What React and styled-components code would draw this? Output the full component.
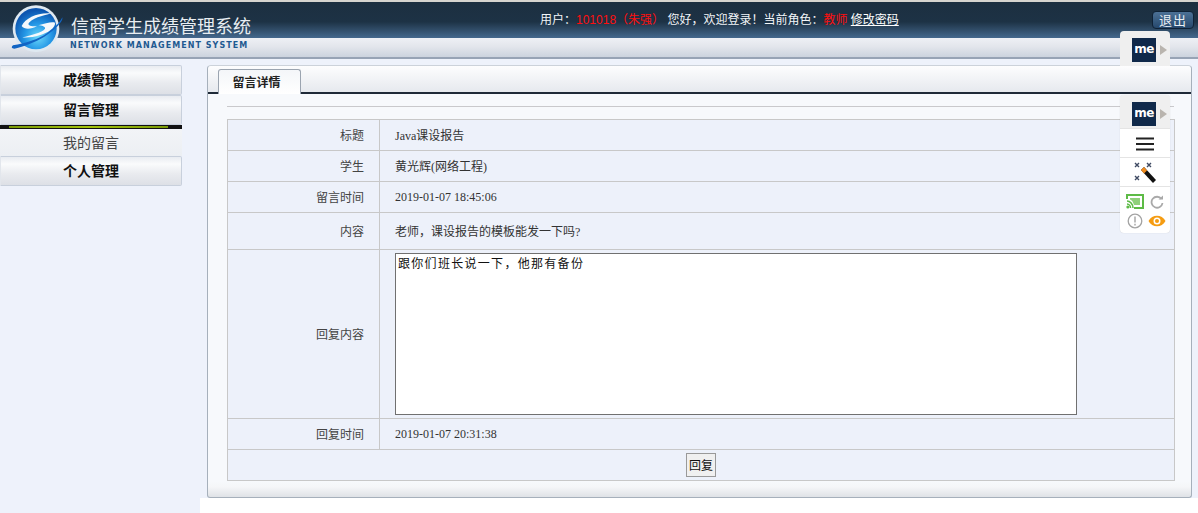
import styled, { createGlobalStyle } from "styled-components"

const rows = [
   { label: "标题", value: "Java课设报告", height: 31 },
   { label: "学生", value: "黄光辉(网络工程)", height: 31 },
   { label: "留言时间", value: "2019-01-07 18:45:06", height: 31 },
   { label: "内容", value: "老师，课设报告的模板能发一下吗?", height: 37 },
]

const Logo = () => (
   <svg width="65" height="56" viewBox="0 0 195 168">
      <defs>
         <radialGradient id="ball" cx="55%" cy="70%" r="65%">
            <stop offset="0" stopColor="#6bd8f9" />
            <stop offset="0.5" stopColor="#2497e6" />
            <stop offset="1" stopColor="#0c55b0" />
         </radialGradient>
      </defs>
      <circle cx="93" cy="80" r="70" fill="#dfe9f1" />
      <circle cx="93" cy="80" r="62" fill="url(#ball)" />
      <path d="M50 72C62 46 100 30 140 34C128 38 90 44 72 62C66 70 78 74 96 72C80 82 58 84 50 72Z" fill="#f5f9fc" />
      <path d="M100 70C120 64 142 58 150 62C152 78 128 92 104 100C86 106 64 108 52 106C76 100 112 92 120 80C122 74 110 70 100 70Z" fill="#f5f9fc" />
      <path d="M172 46C176 58 150 84 118 104C92 120 50 136 28 140C20 140 18 136 24 130C60 124 100 112 128 92C148 78 164 62 172 46Z" fill="#1265c4" />
   </svg>
)

const MeBadge = () => (
   <MeRow>
      <MeLogo>me</MeLogo>
      <svg width="7" height="10" viewBox="0 0 7 10">
         <path d="M0 0L7 5L0 10Z" fill="#b9b4ae" />
      </svg>
   </MeRow>
)

const App = () => {
   return (
      <Page>
         <GlobalStyle />
         <Header>
            <HeaderTop>
               <Brand>
                  <Logo />
                  <Title>信商学生成绩管理系统</Title>
               </Brand>
               <UserInfo>
                  用户：<Red>101018（朱强）</Red>&nbsp;您好，欢迎登录！当前角色：<Red>教师</Red> <UserLink>修改密码</UserLink>
               </UserInfo>
               <LogoutButton>退出</LogoutButton>
            </HeaderTop>
            <HeaderBottom>
               <Subtitle>NETWORK MANAGEMENT SYSTEM</Subtitle>
            </HeaderBottom>
         </Header>
         <Main>
            <Sidebar>
               <MenuHead>成绩管理</MenuHead>
               <MenuHead>留言管理</MenuHead>
               <ActiveBar />
               <MenuItem>我的留言</MenuItem>
               <MenuHead>个人管理</MenuHead>
            </Sidebar>
            <Content>
               <Panel>
                  <TabStrip>
                     <Tab>留言详情</Tab>
                  </TabStrip>
                  <PanelBody>
                     <Rule />
                     <Table>
                        {rows.map((row, index) => (
                           <Row key={index} $height={row.height}>
                              <Label>{row.label}</Label>
                              <Value>{row.value}</Value>
                           </Row>
                        ))}
                        <Row $height={169}>
                           <Label>回复内容</Label>
                           <Value>
                              <Reply readOnly value="跟你们班长说一下，他那有备份" />
                           </Value>
                        </Row>
                        <Row $height={31}>
                           <Label>回复时间</Label>
                           <Value>2019-01-07 20:31:38</Value>
                        </Row>
                        <ButtonRow>
                           <ReplyButton>回复</ReplyButton>
                        </ButtonRow>
                     </Table>
                  </PanelBody>
               </Panel>
            </Content>
         </Main>
         <SmallWidget>
            <MeBadge />
         </SmallWidget>
         <Widget>
            <WidgetHead>
               <MeBadge />
            </WidgetHead>
            <WidgetCell>
               <svg width="20" height="14" viewBox="0 0 20 14">
                  <path d="M1 1.500H19M1 7H19M1 12.500H19" stroke="#222" strokeWidth="2" />
               </svg>
            </WidgetCell>
            <WidgetCell>
               <svg width="24" height="24" viewBox="0 0 24 24">
                  <path d="M2 2L6 6M6 2L2 6M14 2L18 6M18 2L14 6M2 15L6 19M6 15L2 19" stroke="#3f4a63" strokeWidth="1.400" />
                  <path d="M8 9L11 6L23 19L20 22Z" fill="#111" />
                  <path d="M8 9L11 6L14 9.500L11 12.500Z" fill="#f08a1c" />
               </svg>
            </WidgetCell>
            <WidgetTools>
               <svg width="18" height="15" viewBox="0 0 18 15">
                  <path d="M1 5V1H17V14H8" fill="none" stroke="#5dbb46" strokeWidth="2" />
                  <path d="M4 4H14V11H8C7 8 6 6 4 5.500Z" fill="#8fd07a" />
                  <path d="M1 7C4 7 7 10 7 14M1 10C3 10 4.500 12 4.500 14" fill="none" stroke="#5dbb46" strokeWidth="1.600" />
                  <circle cx="1.800" cy="13" r="1.500" fill="#5dbb46" />
               </svg>
               <svg width="14" height="14" viewBox="0 0 14 14">
                  <path d="M11.500 4A5.500 5.500 0 1 0 12.500 8" fill="none" stroke="#a9a9a9" strokeWidth="1.800" />
                  <path d="M8.500 4.500H13V0.500Z" fill="#a9a9a9" />
               </svg>
               <svg width="16" height="16" viewBox="0 0 16 16">
                  <circle cx="8" cy="8" r="6.800" fill="none" stroke="#a3a3a3" strokeWidth="1.300" />
                  <path d="M8 3.500V9.500M8 10.800V12.400" stroke="#a3a3a3" strokeWidth="1.400" />
               </svg>
               <svg width="18" height="12" viewBox="0 0 18 12">
                  <path d="M0.500 6C4 -1 14 -1 17.500 6C14 13 4 13 0.500 6Z" fill="#f59c12" />
                  <circle cx="9" cy="6" r="3.500" fill="#fff" />
                  <circle cx="9" cy="6" r="2" fill="#f59c12" />
               </svg>
            </WidgetTools>
         </Widget>
      </Page>
   )
}

const GlobalStyle = createGlobalStyle`
html, body {
   margin:0;
   padding:0;
   background:#fff;
}
* {
   box-sizing:border-box;
}
`
const Page = styled.div`
position:relative;
width:1198px;
height:513px;
overflow:hidden;
font-family:"Liberation Serif","Noto Sans CJK SC",serif;
font-size:12px;
color:#333;
`
const Header = styled.header`
height:59px;
border-top:2px solid #d6d4cf;
border-bottom:2px solid #97a3b5;
display:flex;
flex-direction:column;
`
const HeaderTop = styled.div`
height:36px;
flex:none;
background:linear-gradient(#1c2f40 0,#1d3245 55%,#44688d 100%);
position:relative;
`
const Brand = styled.div`
display:flex;
align-items:flex-start;
padding-left:5px;
position:absolute;
left:0;
top:0;
z-index:1;
`
const Title = styled.h1`
margin:11px 0 0 1px;
font:400 18px/24px "Noto Sans CJK SC",sans-serif;
color:#e9eef2;
white-space:nowrap;
`
const UserInfo = styled.div`
margin-left:540px;
padding-top:9px;
font:12px/18px "Liberation Sans","Noto Sans CJK SC",sans-serif;
color:#f2f5f8;
white-space:nowrap;
`
const Red = styled.span`
color:#ff0f0f;
`
const UserLink = styled.a`
color:#fff;
text-decoration:underline;
`
const LogoutButton = styled.button`
position:absolute;
left:1152px;
top:9px;
width:42px;
height:18px;
padding:0;
border:1px solid #0f2236;
border-radius:4px;
background:linear-gradient(#4c7196,#26486c);
color:#e8eef4;
font:13px/16px "Noto Sans CJK SC",sans-serif;
letter-spacing:1px;
`
const HeaderBottom = styled.div`
flex:1;
background:linear-gradient(#eef0f5,#e3e6ec 45%,#ccd3de);
padding:1px 0 0 70px;
`
const Subtitle = styled.div`
font:700 8px/13px "DejaVu Sans",sans-serif;
letter-spacing:1.050px;
color:#1f5a91;
white-space:nowrap;
`
const Main = styled.main`
display:flex;
height:439px;
background:#eef2fb;
`
const Sidebar = styled.nav`
width:200px;
flex:none;
padding-top:6px;
display:flex;
flex-direction:column;
height:454px;
background:#eef2fb;
`
const MenuHead = styled.div`
width:182px;
height:30px;
padding-bottom:2px;
display:flex;
align-items:center;
justify-content:center;
border:1px solid #c8d0dc;
border-left-color:#e2e6ec;
border-radius:0 2px 2px 0;
background:linear-gradient(#e9ecf1,#fafbfc 25%,#e9ebef 60%,#dde0e6);
font:700 14px/20px "Noto Sans CJK SC",sans-serif;
color:#111;
`
const ActiveBar = styled.div`
width:182px;
height:4px;
padding:1px 0 1px 9px;
background:#111;
&::before {
   content:"";
   display:block;
   width:159px;
   height:2px;
   background:linear-gradient(90deg,#7a9a08,#a4c40c 50%,#7a9a08);
}
`
const MenuItem = styled.div`
width:182px;
height:27px;
padding-bottom:2px;
display:flex;
align-items:center;
justify-content:center;
background:linear-gradient(#f2f4f7,#eceff3);
font:14px/20px "Noto Sans CJK SC",sans-serif;
color:#444;
`
const Content = styled.div`
flex:1;
padding:6px 0 0 7px;
height:439px;
`
const Panel = styled.section`
width:985px;
height:433px;
border:1px solid #a6b0bb;
border-top-color:#ccd2da;
border-radius:4px 4px 3px 3px;
background:linear-gradient(to top,#dfe2e6 0,#f5f6f8 10px,#f7f9fc 16px);
display:flex;
flex-direction:column;
`
const TabStrip = styled.div`
height:28px;
flex:none;
padding:3px 0 0 10px;
background:linear-gradient(#fdfdfe,#e6e9ee);
border-bottom:2px solid #1f2a38;
border-radius:4px 4px 0 0;
display:flex;
`
const Tab = styled.div`
width:83px;
height:25px;
padding-right:6px;
border:1px solid #9ba4b0;
border-bottom:none;
border-radius:3px 3px 0 0;
background:linear-gradient(#f4f6f9,#fff);
display:flex;
align-items:center;
justify-content:center;
font:700 12px/20px "Noto Sans CJK SC",sans-serif;
color:#222;
`
const PanelBody = styled.div`
padding:12px 17px 0 19px;
flex:1;
`
const Rule = styled.div`
height:1px;
background:#c9c9cc;
margin-bottom:12px;
`
const Table = styled.div`
width:948px;
border:1px solid #c8c8c8;
border-bottom:none;
background:#edf1fa;
`
const Row = styled.div`
display:flex;
height:${(props) => props.$height}px;
border-bottom:1px solid #c8c8c8;
`
const Label = styled.div`
width:152px;
flex:none;
border-right:1px solid #c8c8c8;
padding-right:15px;
display:flex;
align-items:center;
justify-content:flex-end;
color:#444;
`
const Value = styled.div`
flex:1;
padding-left:15px;
display:flex;
align-items:center;
color:#333;
white-space:nowrap;
`
const Reply = styled.textarea`
width:682px;
height:162px;
margin:0;
padding:1px 2px;
border:1px solid #707070;
background:#fff;
font:12px/15px "Noto Sans CJK SC",monospace;
letter-spacing:1.300px;
color:#111;
resize:none;
outline:none;
`
const ButtonRow = styled.div`
height:31px;
display:flex;
align-items:center;
justify-content:center;
border-bottom:1px solid #c8c8c8;
`
const ReplyButton = styled.button`
width:30px;
height:24px;
padding:0;
border:1px solid #999;
background:#f0f0f0;
font:12px/20px "Noto Sans CJK SC",sans-serif;
color:#111;
`
const SmallWidget = styled.div`
position:absolute;
left:1120px;
top:31px;
width:50px;
height:35px;
padding-top:2px;
border-radius:4px 4px 0 0;
background:#efefef;
display:flex;
align-items:center;
`
const Widget = styled.aside`
position:absolute;
left:1120px;
top:95px;
width:50px;
height:138px;
border-radius:4px;
background:#fff;
box-shadow:0 0 1px rgba(0,0,0,.2);
display:flex;
flex-direction:column;
`
const WidgetHead = styled.div`
height:33px;
padding-top:4px;
background:#efefef;
border-radius:4px 4px 0 0;
display:flex;
align-items:center;
`
const WidgetCell = styled.div`
height:29px;
padding-top:1px;
display:flex;
align-items:center;
justify-content:center;
border-top:1px solid #e4e4e4;
`
const WidgetTools = styled.div`
flex:1;
border-top:1px solid #e4e4e4;
display:grid;
grid-template-columns:24px 20px;
align-content:center;
justify-items:center;
align-items:center;
gap:4px 0;
padding:3px 0 0 3px;
`
const MeRow = styled.div`
display:flex;
align-items:center;
gap:4px;
padding-left:12px;
`
const MeLogo = styled.div`
width:24px;
height:24px;
background:#10294a;
color:#fff;
font:700 12px/22px "DejaVu Sans",sans-serif;
text-align:center;
letter-spacing:-0.500px;
overflow:hidden;
`
export default App
